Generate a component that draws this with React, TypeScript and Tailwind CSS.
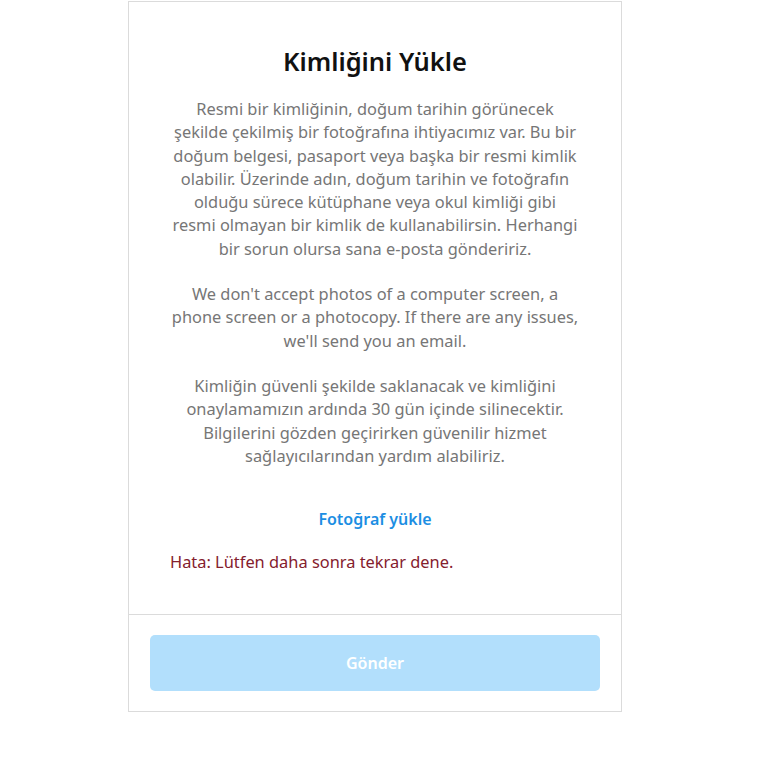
export default function App() {
  return (
    <div className="min-h-screen bg-white font-['Noto_Sans',sans-serif]">
      <div className="ml-[128px] mt-px flex w-[494px] flex-col border border-[#dbdbdb] bg-white">
        {/* Body */}
        <div className="flex flex-col items-center px-[20px] pt-[40px] pb-[40px]">
          <h1 className="text-[25.5px] leading-[38px] font-semibold text-[#111]">Kimliğini Yükle</h1>
          <div className="mt-[17px] space-y-[22px] text-center text-[16.4px] leading-[23.3px] whitespace-nowrap text-[#767676]">
            <p>
              Resmi bir kimliğinin, doğum tarihin görünecek
              <br />
              şekilde çekilmiş bir fotoğrafına ihtiyacımız var. Bu bir
              <br />
              doğum belgesi, pasaport veya başka bir resmi kimlik
              <br />
              olabilir. Üzerinde adın, doğum tarihin ve fotoğrafın
              <br />
              olduğu sürece kütüphane veya okul kimliği gibi
              <br />
              resmi olmayan bir kimlik de kullanabilirsin. Herhangi
              <br />
              bir sorun olursa sana e-posta göndeririz.
            </p>
            <p>
              We don't accept photos of a computer screen, a
              <br />
              phone screen or a photocopy. If there are any issues,
              <br />
              we'll send you an email.
            </p>
            <p>
              Kimliğin güvenli şekilde saklanacak ve kimliğini
              <br />
              onaylamamızın ardında 30 gün içinde silinecektir.
              <br />
              Bilgilerini gözden geçirirken güvenilir hizmet
              <br />
              sağlayıcılarından yardım alabiliriz.
            </p>
          </div>
          <button className="mt-[40px] text-[16px] leading-[24px] font-semibold text-[#1c8ee3]">Fotoğraf yükle</button>
          <p className="mt-[19px] self-start pl-[21px] text-[16.4px] leading-[24px] text-[#84202d]">
            Hata: Lütfen daha sonra tekrar dene.
          </p>
        </div>
        {/* Footer */}
        <div className="border-t border-[#dbdbdb] px-[21px] pt-[20px] pb-[20px]">
          <button className="flex h-[56px] w-full items-center justify-center rounded-[5px] bg-[#b2dffc] text-[16px] font-semibold text-white">
            Gönder
          </button>
        </div>
      </div>
    </div>
  );
}
